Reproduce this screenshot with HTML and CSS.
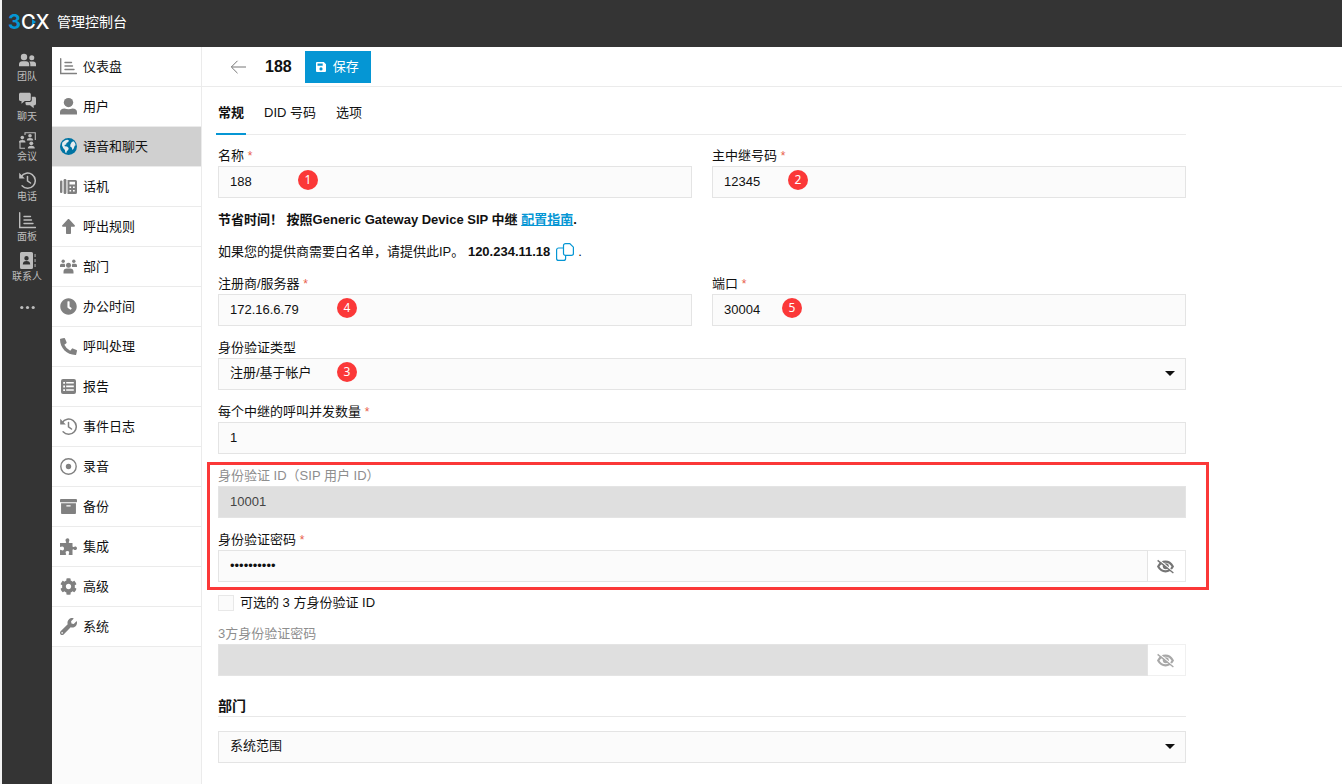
FILE: index.html
```html
<!DOCTYPE html>
<html lang="zh-CN">
<head>
<meta charset="utf-8">
<title>3CX 管理控制台</title>
<link rel="stylesheet" href="styles.css">
</head>
<body>
<svg class="sprite" aria-hidden="true">
  <symbol id="i-chart" viewBox="0 0 17 17"><path d="M.7.700v14.800h15.800M5 4.500h6.500M5 8h7.500M5 11.500h9" fill="none" stroke="currentColor" stroke-width="1.400" stroke-linecap="round"/></symbol>
  <symbol id="i-user" viewBox="0 0 17 17"><ellipse cx="8.500" cy="4.600" rx="4.700" ry="4.600"/><path d="M0 16.500V14c0-2.200 1.800-3.200 4.500-3.500 2.500 1.100 5.500 1.100 8 0 2.700.300 4.500 1.300 4.500 3.500v2.500z"/></symbol>
  <symbol id="i-globe" viewBox="0 0 17 17"><circle cx="8.500" cy="8.500" r="8.500"/><path d="M2.200 4.800C3.500 3 5.200 2 7.500 1.700l1.500.8-.8 1.500L6.500 5l-.3 1.500-1.700.5.3 1.200 2.200.4L8.700 10l-.4 1.800-1.500 1.500-.5 1.700-1-.5-.4-2.500-1.600-1.800L2 7.500zM11.800 4l1.800-.800L15 5l.7 2.200-1 .5-1 2.800-1.200 1.500-.8-2.500-1.500-1 .2-2z" fill="#e6ecef"/></symbol>
  <symbol id="i-fax" viewBox="0 0 17 17"><rect y="2.500" width="2.400" height="12.500" rx="1"/><rect x="3.600" y="1" width="2.800" height="15" rx="1.200"/><path fill-rule="evenodd" d="M7.500 2h8a1.500 1.500 0 0 1 1.500 1.500v11a1.500 1.500 0 0 1-1.500 1.500h-8zM9.500 3.700v2.800h5.500V3.700zM9.500 8.500v1.600h1.600V8.500zm3.500 0v1.600h1.700V8.500zM9.500 12v1.600h1.600V12zm3.500 0v1.600h1.700V12z"/></symbol>
  <symbol id="i-up" viewBox="0 0 17 17"><path d="M8.500 1c.3 0 .5.100.7.300l5.500 6c.6.700.2 1.400-.6 1.400H11V15c0 .600-.4 1-1 1H7c-.6 0-1-.4-1-1V8.700H2.900c-.8 0-1.200-.7-.6-1.400l5.500-6c.2-.2.4-.3.700-.3z"/></symbol>
  <symbol id="i-group" viewBox="0 0 17 17"><circle cx="3.200" cy="3.300" r="1.700"/><circle cx="13.800" cy="3.300" r="1.700"/><circle cx="8.500" cy="7.200" r="2.500"/><path d="M0 9V7.500C0 6.400.7 6 1.700 5.800h2.800L5.200 7 4.900 9zm17 0V7.500c0-1.100-.7-1.500-1.700-1.700h-2.800L11.800 7l.3 2zM3.500 15.500v-1.800c0-2 1.300-3.200 3.300-3.200h3.400c2 0 3.300 1.200 3.300 3.200v1.800z"/></symbol>
  <symbol id="i-clock" viewBox="0 0 512 512"><path d="M256 8C119 8 8 119 8 256s111 248 248 248 248-111 248-248S393 8 256 8Zm92 313-20 25a16 16 0 0 1-22 2l-67-49a40 40 0 0 1-15-31V112a16 16 0 0 1 16-16h32a16 16 0 0 1 16 16v144l58 42a16 16 0 0 1 2 23Z"/></symbol>
  <symbol id="i-phone" viewBox="0 0 512 512"><path d="M497.390 361.800l-112-48a24 24 0 0 0-28 6.900l-49.600 60.600A370.660 370.660 0 0 1 130.600 204.110l60.600-49.600a23.940 23.940 0 0 0 6.900-28l-48-112A24.160 24.160 0 0 0 122.600.610l-104 24A24 24 0 0 0 0 48c0 256.500 207.900 464 464 464a24 24 0 0 0 23.400-18.600l24-104a24.290 24.290 0 0 0-14.010-27.600z"/></symbol>
  <symbol id="i-list" viewBox="0 0 17 17"><path fill-rule="evenodd" d="M3 1h11a2 2 0 0 1 2 2v11a2 2 0 0 1-2 2H3a2 2 0 0 1-2-2V3a2 2 0 0 1 2-2zm.2 3v1.800H5V4zm3 0v1.600h7.600V4zm-3 3.600v1.800H5V7.600zm3 0v1.600h7.600V7.600zm-3 3.600V13H5v-1.800zm3 0v1.600h7.600v-1.600z"/></symbol>
  <symbol id="i-history" viewBox="0 0 17 17"><path d="M2.200 4.600a7.600 7.600 0 1 1 .9 9.200M8.500 4.500v4.300l3 2.200" fill="none" stroke="currentColor" stroke-width="1.500" stroke-linecap="round"/><path d="M.2.800v5.600h5.600z"/></symbol>
  <symbol id="i-record" viewBox="0 0 17 17"><circle cx="8.500" cy="8.500" r="7.700" fill="none" stroke="currentColor" stroke-width="1.400"/><circle cx="8.500" cy="8.500" r="2.700"/></symbol>
  <symbol id="i-archive" viewBox="0 0 512 512"><path d="M32 448c0 17.700 14.300 32 32 32h384c17.700 0 32-14.300 32-32V160H32v288zm160-220c0-6.600 5.400-12 12-12h104c6.600 0 12 5.400 12 12v18c0 6.600-5.400 12-12 12H204c-6.600 0-12-5.400-12-12v-18zM480 32H32C14.300 32 0 46.300 0 64v48c0 8.800 7.200 16 16 16h480c8.800 0 16-7.200 16-16V64c0-17.700-14.300-32-32-32z"/></symbol>
  <symbol id="i-puzzle" viewBox="0 0 17 17"><path d="M0 5h5.500c.8 0 1-.7.500-1.200C5 2.500 5.500.200 7.400.200s2.500 2.200 1.500 3.600c-.4.500-.2 1.200.6 1.200h3v3.300c0 .8.700 1 1.200.600 1.300-1 3.300-.5 3.300 1.300s-2 2.300-3.300 1.300c-.5-.4-1.200-.1-1.200.7V17H9.400c-.8 0-1-.7-.6-1.200.8-1.300.4-2.700-1.400-2.700s-2.200 1.400-1.400 2.700c.4.500.2 1.200-.6 1.200H0v-4.400c0-.8.700-1 1.200-.6 1.400.8 2.800.4 2.800-1.500S2.600 8 1.200 8.800C.7 9.200 0 9 0 8.200z"/></symbol>
  <symbol id="i-cog" viewBox="0 0 512 512"><path d="M487.400 315.700l-42.600-24.600c4.300-23.200 4.300-47 0-70.200l42.600-24.600c4.900-2.800 7.100-8.600 5.500-14-11.100-35.600-30-67.800-54.700-94.600-3.800-4.100-10-5.100-14.800-2.300L380.800 110c-17.900-15.400-38.500-27.300-60.800-35.100V25.800c0-5.600-3.900-10.500-9.400-11.700-36.700-8.200-74.300-7.800-109.200 0-5.500 1.200-9.400 6.100-9.400 11.700V75c-22.200 7.900-42.800 19.800-60.800 35.100L88.700 85.500c-4.900-2.800-11-1.900-14.800 2.300-24.700 26.700-43.600 58.900-54.700 94.600-1.700 5.400.6 11.200 5.500 14L67.300 221c-4.300 23.200-4.300 47 0 70.200l-42.600 24.600c-4.900 2.800-7.100 8.600-5.500 14 11.100 35.600 30 67.800 54.700 94.600 3.800 4.100 10 5.100 14.800 2.300l42.600-24.600c17.900 15.400 38.500 27.300 60.800 35.100v49.200c0 5.600 3.900 10.500 9.400 11.700 36.700 8.200 74.300 7.800 109.200 0 5.500-1.200 9.400-6.100 9.400-11.700v-49.200c22.200-7.900 42.800-19.800 60.800-35.100l42.600 24.600c4.900 2.800 11 1.900 14.800-2.300 24.700-26.700 43.600-58.900 54.700-94.600 1.500-5.500-.7-11.300-5.600-14.100zM256 336c-44.100 0-80-35.900-80-80s35.900-80 80-80 80 35.900 80 80-35.900 80-80 80z"/></symbol>
  <symbol id="i-wrench" viewBox="0 0 512 512"><path d="M507.730 109.100c-2.240-9.030-13.540-12.090-20.120-5.510l-74.360 74.360-67.880-11.310-11.310-67.880 74.360-74.360c6.620-6.620 3.430-17.900-5.660-20.160-47.380-11.740-99.550.910-136.580 37.930-39.640 39.640-50.550 97.100-34.050 147.200L18.740 402.760c-24.990 24.990-24.990 65.510 0 90.500 24.990 24.990 65.510 24.990 90.500 0l213.210-213.210c50.120 16.710 107.470 5.680 147.370-34.220 37.070-37.070 49.700-89.320 37.910-136.730zM64 472c-13.250 0-24-10.750-24-24 0-13.260 10.750-24 24-24s24 10.740 24 24c0 13.250-10.750 24-24 24z"/></symbol>
  <symbol id="i-team" viewBox="0 0 17 17"><circle cx="5" cy="5" r="3.200"/><circle cx="12.800" cy="5.800" r="2.500"/><path d="M0 14.200v-2C0 10.300 1.500 9.300 3 9.300h4c1.800 0 3.200 1 3.200 2.900v2zM11.300 14.200v-2c0-1-.4-1.800-1-2.600h3.900c1.600 0 2.800.9 2.800 2.500v2.100z"/></symbol>
  <symbol id="i-chat" viewBox="0 0 17 17"><path d="M1.500.800h8.800c.8 0 1.500.7 1.500 1.500v5.200c0 .8-.7 1.500-1.500 1.500H5.800L2.500 11.700V9h-1C.7 9 0 8.300 0 7.500V2.300C0 1.500.7.800 1.500.8z"/><path d="M12.800 4.800h2.700c.8 0 1.500.7 1.500 1.500v5.500c0 .8-.7 1.500-1.500 1.500h-.8v3L11 13.300H8c-.8 0-1.500-.7-1.500-1.500V10h4.300c1.200 0 2-.9 2-2z"/></symbol>
  <symbol id="i-meet" viewBox="0 0 17 17"><path d="M6 3V.700h10.300V8M1 9v7.300h5" fill="none" stroke="currentColor" stroke-width="1.100"/><circle cx="11" cy="3.800" r="1.800"/><path d="M7.800 8.600c0-1.700 1-2.500 3.200-2.500s3.200.800 3.200 2.500z"/><circle cx="3.300" cy="5.600" r="1.800"/><path d="M0 10.400c0-1.700 1-2.500 3.300-2.500s3.200.800 3.200 2.500z"/><circle cx="12.300" cy="11.300" r="1.900"/><path d="M8.800 16.500c0-1.900 1.200-2.800 3.500-2.800s3.500.9 3.500 2.800z"/></symbol>
  <symbol id="i-contact" viewBox="0 0 17 17"><path fill-rule="evenodd" d="M2.500 0h10A1.500 1.500 0 0 1 14 1.500v14a1.500 1.500 0 0 1-1.500 1.500h-10A1.500 1.500 0 0 1 1 15.500v-14A1.500 1.500 0 0 1 2.500 0zm5 4a2.200 2.200 0 1 0 0 4.400 2.200 2.200 0 0 0 0-4.400zM3.800 12.500h7.400c0-2.300-1.200-3.400-3.700-3.400s-3.700 1.100-3.700 3.400z"/><path d="M15.600 2v3h.9V2zm0 5v3h.9V7zm0 5v3h.9v-3z"/></symbol>
  <symbol id="i-dots" viewBox="0 0 17 17"><circle cx="2.800" cy="8.500" r="1.600"/><circle cx="8.500" cy="8.500" r="1.600"/><circle cx="14.200" cy="8.500" r="1.600"/></symbol>
  <symbol id="i-eye" viewBox="0 0 17 17"><path d="M1.200 8.500C3 5.300 5.500 3.600 8.500 3.600s5.500 1.700 7.300 4.900c-1.800 3.200-4.300 4.900-7.300 4.900S3 11.700 1.200 8.500z" fill="none" stroke="currentColor" stroke-width="2.200"/><circle cx="8.800" cy="8.300" r="3"/><path d="M2 1.800 17 14.300" stroke="#fff" stroke-width="1.200"/><path d="M.6 2.400 16.400 15" stroke="currentColor" stroke-width="1.400"/></symbol>
  <symbol id="i-caret" viewBox="0 0 10 5"><path d="M0 0h10L5 5z"/></symbol>
</svg>

<header class="topbar">
  <a class="logo" href="#"><span class="logo-num">3</span><span class="logo-word">CX</span><svg class="logo-mark" viewBox="0 0 4 6"><path d="M0 0l4 3-4 3z"/></svg></a>
  <span class="topbar-title">管理控制台</span>
</header>

<div class="shell">
  <nav class="rail" aria-label="应用">
    <a href="#"><svg><use href="#i-team"/></svg>团队</a>
    <a href="#"><svg><use href="#i-chat"/></svg>聊天</a>
    <a href="#"><svg><use href="#i-meet"/></svg>会议</a>
    <a href="#"><svg><use href="#i-history"/></svg>电话</a>
    <a href="#"><svg><use href="#i-chart"/></svg>面板</a>
    <a href="#"><svg><use href="#i-contact"/></svg>联系人</a>
    <a href="#" class="rail-more" aria-label="更多"><svg><use href="#i-dots"/></svg></a>
  </nav>

  <nav class="menu" aria-label="管理">
    <a href="#"><svg><use href="#i-chart"/></svg>仪表盘</a>
    <a href="#"><svg><use href="#i-user"/></svg>用户</a>
    <a href="#" class="active" aria-current="page"><svg><use href="#i-globe"/></svg>语音和聊天</a>
    <a href="#"><svg><use href="#i-fax"/></svg>话机</a>
    <a href="#"><svg><use href="#i-up"/></svg>呼出规则</a>
    <a href="#"><svg><use href="#i-group"/></svg>部门</a>
    <a href="#"><svg><use href="#i-clock"/></svg>办公时间</a>
    <a href="#"><svg><use href="#i-phone"/></svg>呼叫处理</a>
    <a href="#"><svg><use href="#i-list"/></svg>报告</a>
    <a href="#"><svg><use href="#i-history"/></svg>事件日志</a>
    <a href="#"><svg><use href="#i-record"/></svg>录音</a>
    <a href="#"><svg><use href="#i-archive"/></svg>备份</a>
    <a href="#"><svg><use href="#i-puzzle"/></svg>集成</a>
    <a href="#"><svg><use href="#i-cog"/></svg>高级</a>
    <a href="#"><svg><use href="#i-wrench"/></svg>系统</a>
  </nav>

  <main class="main">
    <div class="toolbar">
      <button type="button" class="back" aria-label="返回"><svg viewBox="0 0 16 14"><path d="M15.500 7H1M7 .8.800 7 7 13.200"/></svg></button>
      <h1>188</h1>
      <button type="submit" form="trunk" class="save"><svg viewBox="0 0 10 10"><path fill-rule="evenodd" d="M1 0h6.800L10 2.200V9a1 1 0 0 1-1 1H1a1 1 0 0 1-1-1V1a1 1 0 0 1 1-1zm.5 1.500v2.300h5.200V1.500zM5 5.300a1.600 1.600 0 1 0 0 3.200 1.600 1.600 0 0 0 0-3.200z"/></svg>保存</button>
    </div>

    <form class="content" id="trunk">
      <nav class="tabs" aria-label="设置">
        <a href="#" class="active" aria-current="page">常规</a>
        <a href="#">DID 号码</a>
        <a href="#">选项</a>
      </nav>

      <div class="fields">
        <div class="pair">
          <div class="field">
            <label for="name">名称 <span class="req">*</span></label>
            <div class="control"><input id="name" type="text" value="188"><span class="badge at-1">1</span></div>
          </div>
          <div class="field">
            <label for="main-no">主中继号码 <span class="req">*</span></label>
            <div class="control"><input id="main-no" type="text" value="12345"><span class="badge at-4">2</span></div>
          </div>
        </div>

        <p class="note strong">节省时间！ 按照Generic Gateway Device SIP 中继 <a href="#">配置指南</a>.</p>
        <p class="note"><span>如果您的提供商需要白名单，请提供此IP。 <b>120.234.11.18</b></span><button type="button" class="copy" aria-label="复制"><svg viewBox="0 0 18 18"><path d="M9.500.600h4.300l3.600 3.600v6.200a2 2 0 0 1-2 2H9.500a2 2 0 0 1-2-2V2.600a2 2 0 0 1 2-2zM7.400 5H2.600a2 2 0 0 0-2 2v8.400a2 2 0 0 0 2 2h5a2 2 0 0 0 2-2v-2.800"/></svg></button><span>.</span></p>

        <div class="pair">
          <div class="field">
            <label for="server">注册商/服务器 <span class="req">*</span></label>
            <div class="control"><input id="server" type="text" value="172.16.6.79"><span class="badge at-2">4</span></div>
          </div>
          <div class="field">
            <label for="port">端口 <span class="req">*</span></label>
            <div class="control"><input id="port" type="text" value="30004"><span class="badge at-3">5</span></div>
          </div>
        </div>

        <div class="field">
          <label for="auth-type">身份验证类型</label>
          <div class="control"><select id="auth-type"><option>注册/基于帐户</option></select><svg class="caret"><use href="#i-caret"/></svg><span class="badge at-2">3</span></div>
        </div>

        <div class="field">
          <label for="calls">每个中继的呼叫并发数量 <span class="req">*</span></label>
          <div class="control"><input id="calls" type="text" value="1"></div>
        </div>

        <div class="marked">
          <div class="field disabled">
            <label for="auth-id">身份验证 ID（SIP 用户 ID）</label>
            <div class="control"><input id="auth-id" type="text" value="10001" disabled></div>
          </div>
          <div class="field">
            <label for="auth-pw">身份验证密码 <span class="req">*</span></label>
            <div class="control"><input id="auth-pw" type="password" value="abcdefghij"><button type="button" class="reveal" aria-label="显示密码"><svg><use href="#i-eye"/></svg></button></div>
          </div>
        </div>

        <label class="check"><input type="checkbox">可选的 3 方身份验证 ID</label>

        <div class="field disabled">
          <label for="third-pw">3方身份验证密码</label>
          <div class="control"><input id="third-pw" type="password" disabled><button type="button" class="reveal" aria-label="显示密码" disabled><svg><use href="#i-eye"/></svg></button></div>
        </div>

        <h2>部门</h2>
        <div class="control"><select aria-label="部门"><option>系统范围</option></select><svg class="caret"><use href="#i-caret"/></svg></div>
      </div>
    </form>
  </main>
</div>
</body>
</html>
```
FILE: styles.css
```css
* { box-sizing: border-box; }

body {
  margin: 0;
  min-height: 100vh;
  display: flex;
  flex-direction: column;
  border-left: 2px solid #f3f3f3;
  background: #fff;
  color: #111;
  font: 13px/20px "Liberation Sans", "Noto Sans CJK SC", sans-serif;
}

a { color: inherit; text-decoration: none; }
svg { display: block; fill: currentColor; flex: none; }
button, input, select { font: inherit; color: inherit; }
button { cursor: pointer; }
.sprite { position: absolute; width: 0; height: 0; }

/* Top bar */
.topbar {
  display: flex;
  align-items: center;
  gap: 8px;
  height: 47px;
  padding: 0 6px 4px;
  background: #343434;
  color: #fff;
}
.logo {
  position: relative;
  display: flex;
  width: 41px;
  font: 500 20px/24px Inter, "Liberation Sans", sans-serif;
}
.logo-num { color: #0596d4; font-weight: 700; }
.logo-mark {
  position: absolute;
  left: 24px;
  top: 9px;
  width: 4px;
  height: 6px;
  color: #0596d4;
}
.topbar-title { font-size: 14px; }

.shell { flex: 1; display: flex; }

/* Application rail */
.rail {
  flex: none;
  width: 50px;
  background: #343434;
  color: #bdbdbd;
  padding-top: 5px;
}
.rail a {
  display: flex;
  flex-direction: column;
  align-items: center;
  height: 40px;
  font-size: 10px;
  line-height: 16px;
}
.rail svg { width: 17px; height: 17px; }
.rail .rail-more { justify-content: center; height: 30px; }

/* Section menu */
.menu {
  flex: none;
  width: 150px;
  border-right: 1px solid #ebebeb;
  background: #fbfbfb;
}
.menu a {
  display: flex;
  align-items: center;
  gap: 6px;
  height: 40px;
  padding-left: 8px;
  border-bottom: 1px solid #ebebeb;
  background: #fff;
}
.menu svg { width: 17px; height: 17px; color: #808080; }
.menu .active { background: #d0d0d0; }
.menu .active svg { color: #0074a3; }

/* Main area */
.main { flex: 1; min-width: 0; }
.toolbar {
  display: flex;
  align-items: center;
  height: 40px;
  padding-left: 28px;
  border-bottom: 1px solid #ebebeb;
}
.toolbar h1 { margin: 0 13px 0 18px; font-size: 16px; }
.back { padding: 0; border: 0; background: none; }
.back svg { width: 17px; height: 14px; fill: none; stroke: #777; }
.save {
  display: flex;
  align-items: center;
  gap: 7px;
  height: 32px;
  padding: 0 12px 0 11px;
  border: 0;
  background: #0596d4;
  color: #fff;
}
.save svg { width: 10px; height: 10px; }

.content { max-width: 1000px; padding: 0 16px 20px; }
.tabs {
  display: flex;
  gap: 16px;
  border-bottom: 1px solid #ebebeb;
  margin-left: -2px;
}
.tabs a { padding: 16px 2px 10px; margin-bottom: -1px; border-bottom: 2px solid transparent; }
.tabs .active { font-weight: 700; border-color: #0596d4; }

/* Form */
.fields, .marked { display: flex; flex-direction: column; gap: 12px; }
.fields { padding-top: 11px; }
.pair { display: grid; grid-template-columns: 1fr 1fr; gap: 20px; }
.field > label { display: block; }
.disabled > label { color: #8e8e8e; }
.req { color: #e8604c; font-size: 12px; }

.control { position: relative; display: flex; }
.control input, .control select {
  flex: 1;
  min-width: 0;
  height: 32px;
  margin: 0;
  padding: 0 11px 2px;
  border: 1px solid #e4e4e4;
  border-radius: 0;
  background: #fbfbfb;
  appearance: none;
}
.control input:disabled { background: #dfdfdf; color: #444; opacity: 1; }
.caret {
  position: absolute;
  right: 11px;
  top: 13px;
  width: 10px;
  height: 5px;
  pointer-events: none;
}
.reveal {
  display: grid;
  place-items: center;
  width: 38px;
  padding: 0 2px 0 0;
  border: 1px solid #e8e8e8;
  border-left: 0;
  background: #fff;
  color: #757575;
}
.reveal svg { width: 17px; height: 17px; }
.reveal:disabled { color: #a8a8a8; border-color: #f0f0f0; }

.note { display: flex; align-items: center; gap: 4px; height: 20px; margin: 0; }
.note.strong { display: block; font-weight: 700; }
.note a { color: #0596d4; text-decoration: underline; }
.copy { padding: 0 0 0 2px; border: 0; background: none; color: #0596d4; }
.copy svg { width: 18px; height: 18px; fill: none; stroke: currentColor; stroke-width: 1.2; }

.check { display: flex; align-items: center; gap: 6px; height: 18px; }
.check input {
  appearance: none;
  width: 16px;
  height: 16px;
  margin: 0;
  border: 1px solid #e8e8e8;
  background: #fbfbfb;
}

h2 {
  margin: 0 0 2px;
  padding-top: 8px;
  border-bottom: 1px solid #e8e8e8;
  font-size: 14px;
  line-height: 20px;
}

/* Numbered callouts */
.badge {
  position: absolute;
  top: 4px;
  width: 20px;
  height: 20px;
  border-radius: 50%;
  background: #fb3838;
  color: #fff;
  font: 12px/20px "Noto Sans", sans-serif;
  text-align: center;
}
.at-1 { left: 80px; }
.at-2 { left: 119px; }
.at-3 { left: 70px; }
.at-4 { left: 76px; }

.marked { position: relative; }
.marked::after {
  content: "";
  position: absolute;
  inset: -4px -23px -8px -11px;
  border: 3px solid #fb3838;
  pointer-events: none;
}
```
